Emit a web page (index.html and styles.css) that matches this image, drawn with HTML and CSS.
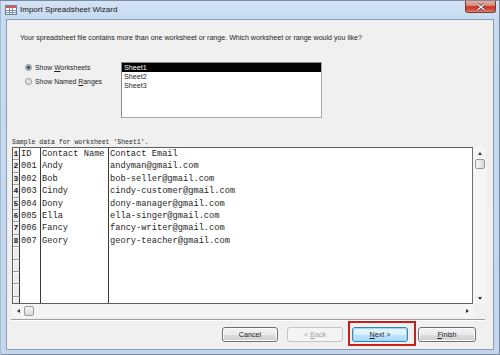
FILE: index.html
```html
<!DOCTYPE html>
<html>
<head>
<meta charset="utf-8">
<title>Import Spreadsheet Wizard</title>
<link rel="stylesheet" href="styles.css">
</head>
<body>
<div class="window">
  <div class="titlebar">
    <svg class="app-icon" width="12" height="10" viewBox="0 0 12 10">
      <rect x="0.5" y="0.5" width="11" height="9" fill="#fff" stroke="#6d7f99"/>
      <rect x="1" y="1" width="10" height="2" fill="#d65a52"/>
      <path d="M1 5.5H11M1 7.5H11M4.5 3V9M7.5 3V9" stroke="#7d93b5" stroke-width="1"/>
    </svg>
    <span class="title">Import Spreadsheet Wizard</span>
    <div class="close-btn">
      <svg width="10" height="8" viewBox="0 0 10 8">
        <path d="M1.5 1L8.5 7M8.5 1L1.5 7" stroke="#5a1f1a" stroke-width="2.6"/>
        <path d="M1.5 1L8.5 7M8.5 1L1.5 7" stroke="#fff" stroke-width="1.5"/>
      </svg>
    </div>
  </div>
  <div class="client">
    <p class="prompt">Your spreadsheet file contains more than one worksheet or range. Which worksheet or range would you like?</p>
    <div class="options">
      <div class="radios">
        <div class="radio-row"><span class="radio checked"></span><span>Show <u>W</u>orksheets</span></div>
        <div class="radio-row"><span class="radio"></span><span>Show Named <u>R</u>anges</span></div>
      </div>
      <ul class="listbox">
        <li class="selected">Sheet1</li>
        <li>Sheet2</li>
        <li>Sheet3</li>
      </ul>
    </div>
    <div class="sample-label">Sample data for worksheet 'Sheet1'.</div>
    <div class="grid-area">
      <div class="grid-top">
        <div class="datagrid">
          <div class="gr"><div class="c rn">1</div><div class="c">ID</div><div class="c">Contact Name</div><div class="c last">Contact Email</div></div>
          <div class="gr"><div class="c rn">2</div><div class="c">001</div><div class="c">Andy</div><div class="c last">andyman@gmail.com</div></div>
          <div class="gr"><div class="c rn">3</div><div class="c">002</div><div class="c">Bob</div><div class="c last">bob-seller@gmail.com</div></div>
          <div class="gr"><div class="c rn">4</div><div class="c">003</div><div class="c">Cindy</div><div class="c last">cindy-customer@gmail.com</div></div>
          <div class="gr"><div class="c rn">5</div><div class="c">004</div><div class="c">Dony</div><div class="c last">dony-manager@gmail.com</div></div>
          <div class="gr"><div class="c rn">6</div><div class="c">005</div><div class="c">Ella</div><div class="c last">ella-singer@gmail.com</div></div>
          <div class="gr"><div class="c rn">7</div><div class="c">006</div><div class="c">Fancy</div><div class="c last">fancy-writer@gmail.com</div></div>
          <div class="gr"><div class="c rn">8</div><div class="c">007</div><div class="c">Geory</div><div class="c last">geory-teacher@gmail.com</div></div>
          <div class="gr"><div class="c rn"></div><div class="c"></div><div class="c"></div><div class="c last"></div></div>
          <div class="gr"><div class="c rn"></div><div class="c"></div><div class="c"></div><div class="c last"></div></div>
          <div class="gr"><div class="c rn"></div><div class="c"></div><div class="c"></div><div class="c last"></div></div>
          <div class="gr"><div class="c rn"></div><div class="c"></div><div class="c"></div><div class="c last"></div></div>
          <div class="gr"><div class="c rn"></div><div class="c"></div><div class="c"></div><div class="c last"></div></div>
        </div>
        <div class="vscroll">
          <div class="arrow-box"><span class="tri up"></span></div>
          <div class="thumb"></div>
          <div class="spacer"></div>
          <div class="arrow-box"><span class="tri down"></span></div>
        </div>
      </div>
      <div class="hscroll">
        <div class="arrow-box h"><span class="tri left"></span></div>
        <div class="thumb h"></div>
        <div class="spacer"></div>
        <div class="arrow-box h"><span class="tri right"></span></div>
      </div>
    </div>
    <div class="separator"></div>
    <div class="buttons">
      <button class="btn">Cancel</button>
      <button class="btn disabled">&lt; <u>B</u>ack</button>
      <span class="next-wrap">
        <button class="btn default"><u>N</u>ext &gt;</button>
        <span class="highlight"></span>
      </span>
      <button class="btn finish"><u>F</u>inish</button>
    </div>
  </div>
</div>
</body>
</html>
```

FILE: styles.css
```css
html, body {
  margin: 0;
  padding: 0;
}

body {
  width: 500px;
  height: 355px;
  overflow: hidden;
  font-family: "Liberation Sans", Arial, sans-serif;
  color: #1e1e1e;
}

.window {
  width: 500px;
  height: 355px;
  box-sizing: border-box;
  display: flex;
  flex-direction: column;
  background: linear-gradient(to bottom, #d5e4f5 0px, #c6daf0 19px, #c2d7ee 100%);
  box-shadow: inset 0 1px 0 #7b8ca2, inset 1px 0 0 #a9bbd0, inset -1px 0 0 #7b8ca2, inset 0 -1px 0 #7b8ca2;
}

.titlebar {
  height: 19px;
  flex-shrink: 0;
  display: flex;
  align-items: center;
  padding-left: 5px;
}

.app-icon {
  display: block;
  margin-right: 3px;
  margin-top: 1px;
}

.title {
  font-size: 8px;
  color: #151515;
  line-height: 19px;
  white-space: nowrap;
}

.close-btn {
  align-self: flex-start;
  margin-left: auto;
  margin-right: 4px;
  margin-top: 1px;
  width: 31px;
  height: 12px;
  box-sizing: border-box;
  border: 1px solid #7a3a33;
  border-top: none;
  border-radius: 0 0 3px 3px;
  background: linear-gradient(to bottom, #e9b0a2 0%, #d88a78 40%, #c8352a 52%, #d0503c 80%, #df8a72 100%);
  display: flex;
  align-items: center;
  justify-content: center;
}

.close-btn svg {
  display: block;
}

.client {
  flex: 1;
  margin: 0 6px 5px 6px;
  border: 1px solid #8b9db4;
  background: #f0f0f0;
  display: flex;
  flex-direction: column;
  min-height: 0;
}

.prompt {
  margin: 13px 0 0 13px;
  height: 10px;
  line-height: 10px;
  font-size: 7.1px;
  white-space: nowrap;
}

.options {
  display: flex;
  margin-top: 19px;
  padding-left: 18px;
  height: 56px;
}

.radios {
  width: 96px;
  display: flex;
  flex-direction: column;
  gap: 4px;
}

.radio-row {
  display: flex;
  align-items: center;
  height: 10px;
  gap: 3px;
  font-size: 6.9px;
  white-space: nowrap;
}

.radio {
  width: 7px;
  height: 7px;
  box-sizing: border-box;
  border-radius: 50%;
  border: 1px solid #8c8e90;
  background: radial-gradient(circle at 50% 50%, #dcdcdc 0, #f4f4f4 100%);
  flex-shrink: 0;
}

.radio.checked {
  background: radial-gradient(circle at 50% 50%, #2f4862 0, #3f5d7e 1.3px, #b9cadb 2.2px, #f2f2f2 3.5px);
}

.listbox {
  width: 201px;
  height: 56px;
  box-sizing: border-box;
  margin: 0;
  padding: 0;
  list-style: none;
  background: #fff;
  border: 1px solid #a9a9a9;
  border-top-color: #8a8a8a;
  border-left-color: #8a8a8a;
}

.listbox li {
  height: 9px;
  line-height: 9px;
  font-size: 7.2px;
  padding-left: 2px;
  white-space: nowrap;
}

.listbox li.selected {
  background: #000;
  color: #fff;
}

.sample-label {
  margin: 21px 0 0 5px;
  height: 8px;
  line-height: 8px;
  font-family: "Liberation Mono", "Courier New", monospace;
  font-size: 6.5px;
  color: #2a2a2a;
  white-space: nowrap;
}

.grid-area {
  margin-left: 5px;
  width: 474px;
  display: flex;
  flex-direction: column;
}

.grid-top {
  display: flex;
  height: 157px;
}

.datagrid {
  width: 461px;
  height: 157px;
  box-sizing: border-box;
  border: 1px solid #5e5e5e;
  border-right-color: #707070;
  background: #fff;
  overflow: hidden;
  font-family: "Liberation Mono", "Courier New", monospace;
  font-size: 8.7px;
  color: #262626;
}

.gr {
  display: grid;
  grid-template-columns: 7px 21px 68px 1fr;
  height: 12.4px;
}

.c {
  box-sizing: border-box;
  border-right: 1px solid #3a3a3a;
  padding-left: 1px;
  line-height: 12.4px;
  white-space: nowrap;
  overflow: hidden;
}

.c.last {
  border-right: none;
  padding-left: 1px;
}

.c.rn {
  background: #ececec;
  border-bottom: 1px solid #9c9c9c;
  box-shadow: inset 1px 1px 0 #fdfdfd;
  padding-left: 0;
  text-align: center;
  font-weight: bold;
  font-size: 8px;
  line-height: 11.4px;
  color: #222;
}

.vscroll {
  width: 13px;
  height: 157px;
  background: #f5f5f5;
  display: flex;
  flex-direction: column;
  align-items: center;
}

.hscroll {
  width: 461px;
  height: 13px;
  background: #f5f5f5;
  display: flex;
  align-items: center;
}

.arrow-box {
  width: 13px;
  height: 12px;
  display: flex;
  align-items: center;
  justify-content: center;
  flex-shrink: 0;
}

.arrow-box.h {
  width: 12px;
  height: 13px;
}

.spacer {
  flex: 1;
}

.thumb {
  width: 10px;
  height: 10px;
  box-sizing: border-box;
  border: 1px solid #9a9a9a;
  border-radius: 2px;
  background: linear-gradient(to right, #f6f6f6, #dadada);
  flex-shrink: 0;
}

.thumb.h {
  background: linear-gradient(to bottom, #f6f6f6, #dadada);
}

.tri {
  width: 0;
  height: 0;
  display: block;
}

.tri.up {
  border-left: 2.5px solid transparent;
  border-right: 2.5px solid transparent;
  border-bottom: 3px solid #333;
}

.tri.down {
  border-left: 2.5px solid transparent;
  border-right: 2.5px solid transparent;
  border-top: 3px solid #333;
}

.tri.left {
  border-top: 2.5px solid transparent;
  border-bottom: 2.5px solid transparent;
  border-right: 3px solid #333;
}

.tri.right {
  border-top: 2.5px solid transparent;
  border-bottom: 2.5px solid transparent;
  border-left: 3px solid #333;
}

.separator {
  margin: 2px 8px 0 4px;
  border-top: 1px solid #a0a0a0;
  border-bottom: 1px solid #ffffff;
}

.buttons {
  display: flex;
  justify-content: flex-end;
  align-items: flex-start;
  gap: 9px;
  margin-top: 6px;
  padding-right: 17px;
}

.btn {
  width: 56px;
  height: 15px;
  box-sizing: border-box;
  margin: 0;
  padding: 0;
  border: 1px solid #707070;
  border-radius: 3px;
  background: linear-gradient(to bottom, #f2f2f2 0%, #ebebeb 50%, #dddddd 51%, #cfcfcf 100%);
  box-shadow: inset 0 0 0 1px #fcfcfc;
  font-family: "Liberation Sans", Arial, sans-serif;
  font-size: 7.2px;
  color: #1b1b1b;
  line-height: 13px;
  text-align: center;
  display: block;
}

.btn.finish {
  width: 58px;
  margin-left: 1px;
}

.btn.disabled {
  border-color: #c2c6c9;
  background: #f4f4f4;
  box-shadow: none;
  color: #a3a3a3;
}

.btn.default {
  border-color: #3c7fb1;
  box-shadow: inset 0 0 0 1px #9fdcf8;
  background: linear-gradient(to bottom, #eaf6fd 0%, #d9f0fc 50%, #bee6fd 51%, #a7d9f5 100%);
}

.next-wrap {
  position: relative;
  display: block;
}

.highlight {
  position: absolute;
  left: -4px;
  top: -6px;
  width: 68px;
  height: 25px;
  box-sizing: border-box;
  border: 2px solid #c81e1e;
  pointer-events: none;
}
```
